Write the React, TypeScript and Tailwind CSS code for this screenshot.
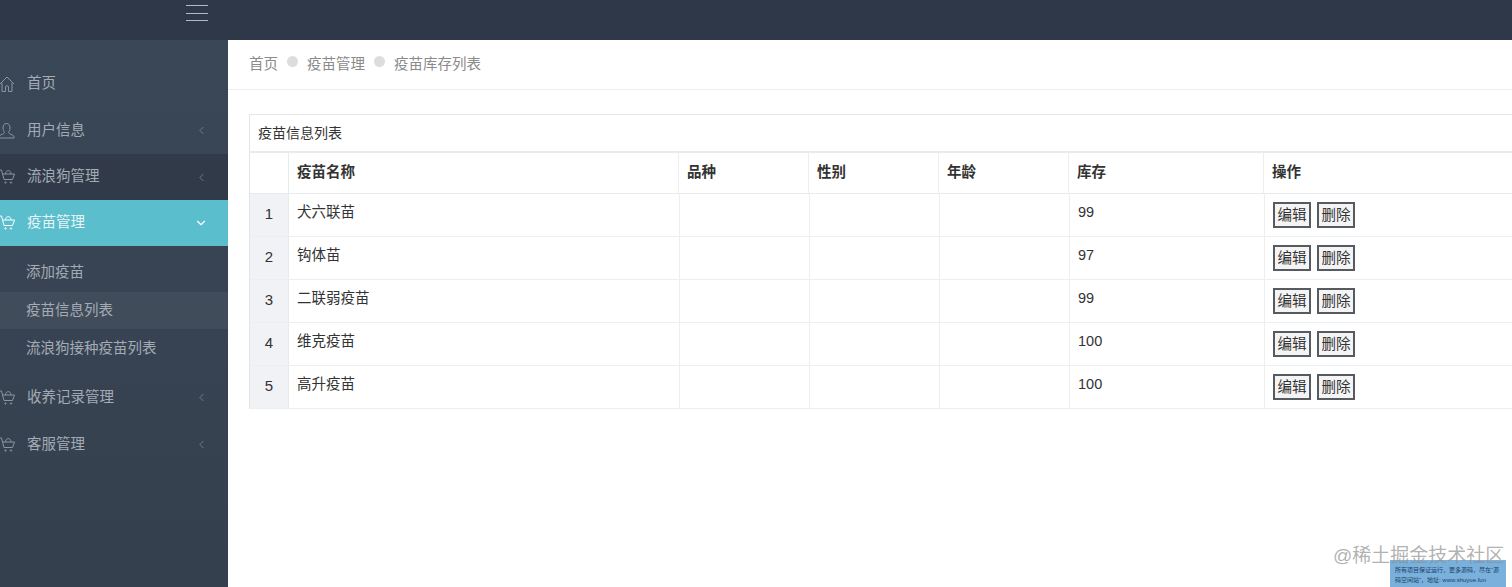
import React from 'react';
import { ChevronDown, ChevronLeft } from 'lucide-react';

const cjk = '"Liberation Sans", "Noto Sans CJK SC", sans-serif';

const HomeIcon = () => (
  <svg width="18" height="18" viewBox="0 0 18 18" fill="none" stroke="currentColor" strokeWidth="1">
    <path d="M1 9 L8 2 L15 9 M3 8 V16.5 H6.5 V11.5 Q8 10 9.5 11.5 V16.5 H13 V8" />
  </svg>
);

const UserIcon = () => (
  <svg width="18" height="18" viewBox="0 0 18 18" fill="none" stroke="currentColor" strokeWidth="1">
    <path d="M7.5 1.5 C5 1.5 4 3.5 4 6 C4 8 5 9.5 5.5 10.5 C5.5 12 1 12.5 0 14.5 V16 H15 V14.5 C14 12.5 9.5 12 9.5 10.5 C10 9.5 11 8 11 6 C11 3.5 10 1.5 7.5 1.5 Z" />
  </svg>
);

const CartIcon = () => (
  <svg width="18" height="18" viewBox="0 0 18 18" fill="none" stroke="currentColor" strokeWidth="1">
    <path d="M0 2 H2.5 L5 11.5 H13.5 L15.5 6 H3.6" />
    <path d="M6.5 6 C6.5 1.5 12 1.5 12 6" />
    <circle cx="6.5" cy="14.5" r="0.7" />
    <circle cx="12" cy="14.5" r="0.7" />
  </svg>
);

type NavItem = { label: string; icon: React.ReactNode; chevron?: boolean; tone?: string; height: string };

const NavRow = ({ label, icon, chevron, tone, height }: NavItem) => (
  <div className={`flex items-center pr-[20px] ${height} ${tone ?? 'text-[#a3abb5]'}`}>
    <span className="ml-[-1px] w-[28px] shrink-0 text-[#8b95a1]">{icon}</span>
    <span className="flex-1 text-[14.5px]">{label}</span>
    {chevron && <ChevronLeft size={13} strokeWidth={1.5} className="text-[#7e8894]" />}
  </div>
);

const rows = [
  { no: 1, name: '犬六联苗', stock: '99' },
  { no: 2, name: '钩体苗', stock: '97' },
  { no: 3, name: '二联弱疫苗', stock: '99' },
  { no: 4, name: '维克疫苗', stock: '100' },
  { no: 5, name: '高升疫苗', stock: '100' },
];

const Sidebar = () => (
  <aside className="h-full w-[228px] shrink-0 bg-gradient-to-b from-[#3a4757] to-[#35404e] pt-[20px]">
    <NavRow label="首页" icon={<HomeIcon />} height="h-[47px]" />
    <NavRow label="用户信息" icon={<UserIcon />} chevron height="h-[47px]" />
    <div className="bg-[#313a49]">
      <NavRow label="流浪狗管理" icon={<CartIcon />} chevron height="h-[46px]" />
    </div>
    <div className="flex h-[46px] items-center bg-[#5bbecd] pr-[20px] text-[#e6f5f7]">
      <span className="ml-[-1px] w-[28px] shrink-0 text-white">
        <CartIcon />
      </span>
      <span className="flex-1 text-[14.5px]">疫苗管理</span>
      <ChevronDown size={14} strokeWidth={2} className="text-white" />
    </div>
    <div className="pt-[7px] pb-[6px] pl-[26px] text-[14.5px] text-[#a3abb5]">
      <div className="flex h-[39px] items-center">添加疫苗</div>
      <div className="ml-[-26px] flex h-[37px] items-center bg-[#414c5b] pl-[26px]">疫苗信息列表</div>
      <div className="flex h-[39px] items-center">流浪狗接种疫苗列表</div>
    </div>
    <NavRow label="收养记录管理" icon={<CartIcon />} chevron height="h-[47px]" />
    <NavRow label="客服管理" icon={<CartIcon />} chevron height="h-[47px]" />
  </aside>
);

const VaccineTable = () => (
  <div className="mt-[24px] ml-[21px] w-[1300px] border border-[#e4e6e8] border-b-0 border-r-0 bg-white">
    <div className="flex h-[38px] items-center border-b-2 border-[#e9ebed] pl-[8px] text-[14px] text-[#333333]">
      疫苗信息列表
    </div>
    <div className="flex h-[41px] border-b border-[#e8eaec] text-[14.5px] font-bold text-[#333333]">
      <div className="w-[39px] border-r border-[#e8eaec]" />
      <div className="flex w-[390px] items-center border-r border-[#eeeeee] pl-[8px]">疫苗名称</div>
      <div className="flex w-[130px] items-center border-r border-[#eeeeee] pl-[8px]">品种</div>
      <div className="flex w-[130px] items-center border-r border-[#eeeeee] pl-[8px]">性别</div>
      <div className="flex w-[130px] items-center border-r border-[#eeeeee] pl-[8px]">年龄</div>
      <div className="flex w-[195px] items-center border-r border-[#eeeeee] pl-[8px]">库存</div>
      <div className="flex flex-1 items-center pl-[8px]">操作</div>
    </div>
    {rows.map((row) => (
      <div key={row.no} className="flex h-[43px] border-b border-[#eceef0] text-[14.5px] text-[#333333]">
        <div className="flex w-[39px] items-center justify-center border-r border-[#e8eaec] bg-[#f1f2f5] pb-[2px] text-[15px]">
          {row.no}
        </div>
        <div className="flex w-[391px] items-center border-r border-[#eeeeee] pb-[4px] pl-[8px]">{row.name}</div>
        <div className="w-[130px] border-r border-[#eeeeee]" />
        <div className="w-[130px] border-r border-[#eeeeee]" />
        <div className="w-[130px] border-r border-[#eeeeee]" />
        <div className="flex w-[195px] items-center border-r border-[#eeeeee] pb-[4px] pl-[8px]">{row.stock}</div>
        <div className="flex flex-1 items-center gap-[6px] pl-[8px]">
          <button className="h-[26px] w-[38px] border-2 border-[#555b60] bg-[#f4f4f4] text-[14.5px] leading-none text-[#333333]">
            编辑
          </button>
          <button className="h-[26px] w-[38px] border-2 border-[#555b60] bg-[#f4f4f4] text-[14.5px] leading-none text-[#333333]">
            删除
          </button>
        </div>
      </div>
    ))}
  </div>
);

export default function App() {
  return (
    <div className="relative flex h-[587px] w-[1512px] flex-col overflow-hidden bg-white" style={{ fontFamily: cjk }}>
      <header className="h-[40px] shrink-0 bg-[#2f3848]">
        <div className="ml-[186px] flex h-[16px] w-[22px] translate-y-[5px] flex-col justify-between">
          <span className="h-px bg-[#b4bac2]" />
          <span className="h-px bg-[#b4bac2]" />
          <span className="h-px bg-[#b4bac2]" />
        </div>
      </header>
      <div className="flex min-h-0 flex-1">
        <Sidebar />
        <main className="min-w-0 flex-1 overflow-hidden">
          <div className="flex h-[50px] items-center border-b border-[#eeeeee] pl-[21px] text-[14.5px] text-[#8a8a8a]">
            <span>首页</span>
            <span className="mx-[9px] mb-[6px] h-[11px] w-[11px] rounded-full bg-[#dddddd]" />
            <span>疫苗管理</span>
            <span className="mx-[9px] mb-[6px] h-[11px] w-[11px] rounded-full bg-[#dddddd]" />
            <span>疫苗库存列表</span>
          </div>
          <VaccineTable />
        </main>
      </div>
      <div className="absolute bottom-0 left-[1390px] h-[27px] w-[116px] bg-[#79b0dc] px-[5px] pt-[5px] text-[6px] leading-[10px] text-[#1d3f66]">
        所有项目保证运行，更多源码，尽在“源码空间站”，地址: www.shuyue.fun
      </div>
      <div className="absolute top-[546px] left-[1333px] text-[19px] leading-none text-[#8f8f8f]/70">@稀土掘金技术社区</div>
    </div>
  );
}
